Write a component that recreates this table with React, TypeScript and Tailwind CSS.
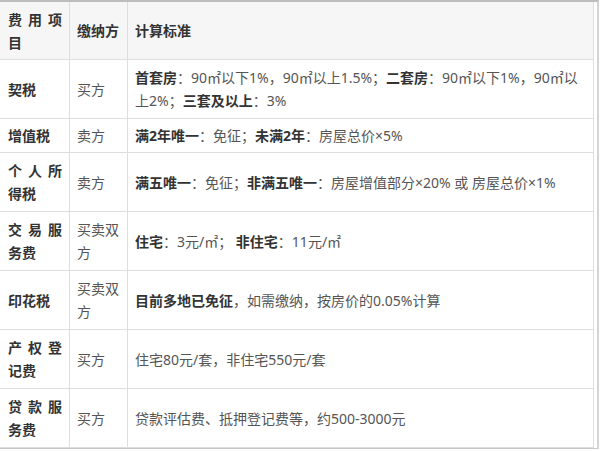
import React from "react";

const FONT = { fontFamily: '"Noto Sans", "Noto Sans CJK SC", sans-serif' };

type Row = { name: string; payer: string; body: React.ReactNode; single?: boolean };

const B = ({ children }: { children: React.ReactNode }) => (
  <b className="font-bold text-[#333]">{children}</b>
);

const rows: Row[] = [
  {
    name: "契税",
    payer: "买方",
    body: (
      <>
        <B>首套房</B>：90㎡以下1%，90㎡以上1.5%；<B>二套房</B>：90㎡以下1%，90㎡以上2%；<B>三套及以上</B>：3%
      </>
    ),
  },
  {
    name: "增值税",
    payer: "卖方",
    single: true,
    body: (
      <>
        <B>满2年唯一</B>：免征；<B>未满2年</B>：房屋总价×5%
      </>
    ),
  },
  {
    name: "个人所得税",
    payer: "卖方",
    body: (
      <>
        <B>满五唯一</B>：免征；<B>非满五唯一</B>：房屋增值部分×20% 或 房屋总价×1%
      </>
    ),
  },
  {
    name: "交易服务费",
    payer: "买卖双方",
    body: (
      <>
        <B>住宅</B>：3元/㎡； <B>非住宅</B>：11元/㎡
      </>
    ),
  },
  {
    name: "印花税",
    payer: "买卖双方",
    body: (
      <>
        <B>目前多地已免征</B>，如需缴纳，按房价的0.05%计算
      </>
    ),
  },
  { name: "产权登记费", payer: "买方", body: <>住宅80元/套，非住宅550元/套</> },
  { name: "贷款服务费", payer: "买方", body: <>贷款评估费、抵押登记费等，约500-3000元</> },
];

export default function App() {
  return (
    <div className="w-[600px] h-[451px] bg-white overflow-hidden" style={FONT}>
      <div className="w-[599px] border-t-2 border-t-[#bdbdbd] border-r-2 border-r-[#d4d4d4] border-b border-b-[#c8c8c8]">
        <div className="grid grid-cols-[70px_58px_466px] text-[14px] leading-[23px] text-[#555]">
          <div className="border-r border-b border-[#dedede] bg-[#f6f6f6] pl-[8px] pr-[7px] pt-[6px] pb-[5px] font-bold text-[#333] text-justify">
            费用项目
          </div>
          <div className="border-r border-b border-[#dedede] bg-[#f6f6f6] px-[7px] flex items-center font-bold text-[#333]">
            缴纳方
          </div>
          <div className="border-r border-b border-[#dedede] bg-[#f6f6f6] px-[7px] flex items-center font-bold text-[#333]">
            计算标准
          </div>
          {rows.map((r) =>
            r.single ? (
              <React.Fragment key={r.name}>
                <div className="border-r border-b border-[#dedede] pl-[8px] pr-[7px] py-[5px] font-bold text-[#333] flex items-center">
                  <span className="block w-full text-justify">{r.name}</span>
                </div>
                <div className="border-r border-b border-[#dedede] px-[7px] py-[5px] flex items-center">
                  {r.payer}
                </div>
                <div className="border-r border-b border-[#dedede] px-[7px] py-[5px] flex items-center">
                  <span>{r.body}</span>
                </div>
              </React.Fragment>
            ) : (
              <React.Fragment key={r.name}>
                <div className="border-r border-b border-[#dedede] pl-[8px] pr-[7px] py-[6px] font-bold text-[#333] flex items-center">
                  <span className="block w-full text-justify">{r.name}</span>
                </div>
                <div className="border-r border-b border-[#dedede] px-[7px] py-[6px] flex items-center">
                  {r.payer}
                </div>
                <div className="border-r border-b border-[#dedede] px-[7px] py-[6px] flex items-center">
                  <span>{r.body}</span>
                </div>
              </React.Fragment>
            )
          )}
        </div>
      </div>
    </div>
  );
}
